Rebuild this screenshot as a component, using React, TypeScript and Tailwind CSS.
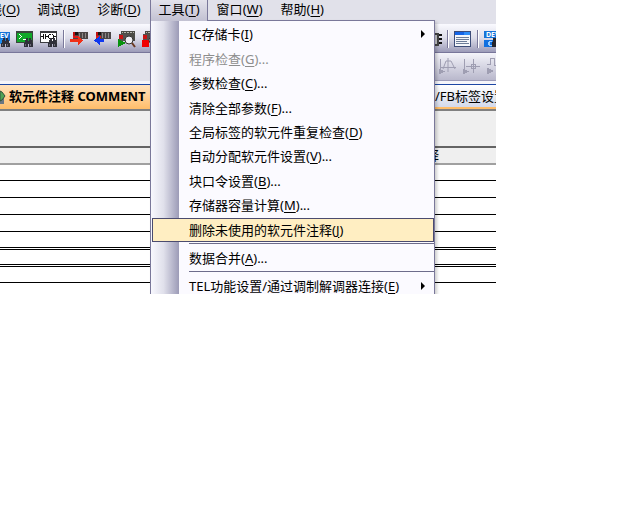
import type { ReactNode } from 'react';
import clsx from 'clsx';

type MenuEntry = {
  label: string;
  accessKey: string;
  suffix?: string;
  disabled?: boolean;
  selected?: boolean;
  submenu?: boolean;
};

const topMenus: (MenuEntry & { open?: boolean })[] = [
  { label: '调试', accessKey: 'B' },
  { label: '诊断', accessKey: 'D' },
  { label: '工具', accessKey: 'T', open: true },
  { label: '窗口', accessKey: 'W' },
  { label: '帮助', accessKey: 'H' },
];

const toolItems: MenuEntry[] = [
  { label: 'IC存储卡', accessKey: 'I', submenu: true },
  { label: '程序检查', accessKey: 'G', suffix: '...', disabled: true },
  { label: '参数检查', accessKey: 'C', suffix: '...' },
  { label: '清除全部参数', accessKey: 'F', suffix: '...' },
  { label: '全局标签的软元件重复检查', accessKey: 'D' },
  { label: '自动分配软元件设置', accessKey: 'V', suffix: '...' },
  { label: '块口令设置', accessKey: 'B', suffix: '...' },
  { label: '存储器容量计算', accessKey: 'M', suffix: '...' },
  { label: '删除未使用的软元件注释', accessKey: 'J', selected: true },
];

// height includes the bottom rule
const rows = [
  'h-4 border-b',
  'h-[17px] border-b',
  'h-[17px] border-b',
  'h-[17px] border-b',
  'h-[18px] border-b-3 border-double',
  'h-[17px] border-b-3 border-double',
  'h-4 border-b',
];

function Label({ label, accessKey, suffix }: MenuEntry) {
  return (
    <span>
      {label}(<u className="underline-offset-2">{accessKey}</u>){suffix}
    </span>
  );
}

function Icon({ width = 18, children }: { width?: number; children: ReactNode }) {
  return (
    <svg
      className="block shrink-0"
      width={width}
      height="17"
      viewBox={`0 0 ${width} 17`}
      shapeRendering="crispEdges"
      aria-hidden="true"
    >
      {children}
    </svg>
  );
}

function Binoculars({ x = 8 }: { x?: number }) {
  return (
    <g transform={`translate(${x} 7)`} fill="#30303a">
      <path d="M1 2h1V0h2v3h1V0h2v2h1v3h1v4H5V6H4v3H0V5h1z" />
      <path d="M1 6h1v2H1zM6 6h1v2H6z" fill="#6c6c78" />
    </g>
  );
}

function DevFind() {
  return (
    <Icon width={10}>
      <path d="M0 1h10v9H0z" fill="#1673d8" />
      <text x="-5" y="7" fontSize="7" fontWeight="700" fill="#fff">DEV</text>
      <path d="M0 8h4v5H0z" fill="#1e8cf0" />
      <Binoculars x={1} />
    </Icon>
  );
}

function ScreenFind() {
  return (
    <Icon>
      <path d="M0 0h17v12H0z" fill="#3c463e" />
      <path d="M1 2h15v9H1z" fill="#10a828" />
      <path d="M3 3h1v1h1v1h1v1H5v1H4v1H3V7h1V6h1V5H4V4H3zM7 8h4v1H7z" fill="#fff" />
      <Binoculars />
    </Icon>
  );
}

function ContactFind() {
  return (
    <Icon>
      <path d="M0 0h17v12H0z" fill="#3c3c40" />
      <path d="M1 2h15v9H1z" fill="#fff" />
      <path
        d="M1 5h2V3h1v5H3V6H1zM5 3h1v2h2V4h1V3h2v1H9v3h2v1H9V7H8V6H6v2H5zM12 3h1v1h1v1h2v1h-2v1h-1v1h-1V7h1V4h-1z"
        fill="#111"
      />
      <Binoculars />
    </Icon>
  );
}

function Controller({ x = 0, y = 0 }: { x?: number; y?: number }) {
  return (
    <g transform={`translate(${x} ${y})`}>
      <path d="M0 1h15v7H0z" fill="#4b4546" />
      <path d="M0 1h2v5H0z" fill="#c01010" />
      <path d="M2 1h3v3H2z" fill="#1c1010" />
      <path d="M6 2h1v5H6zM9 2h1v5H9zM12 2h1v5h-1z" fill="#8b8686" />
      <path d="M0 5h5v2H0z" fill="#e01818" />
    </g>
  );
}

function WritePlc() {
  return (
    <Icon>
      <Controller x={3} />
      <path d="M0 8h8V5h1v1h1v1h1v1h1v1h1v1h-1v1h-1v1h-1v1H9v1H8v-3H0z" fill="#f03018" />
    </Icon>
  );
}

function ReadPlc() {
  return (
    <Icon>
      <Controller x={2} />
      <path d="M10 8H6V5H5v1H4v1H3v1H1v1H0v1h1v1h2v1h1v1h1v1h1v-3h4z" fill="#1038f0" />
    </Icon>
  );
}

function Monitor({ stop = false }: { stop?: boolean }) {
  return (
    <Icon>
      <path d="M3 0h14v10H3z" fill="#4c4c46" />
      <path d="M4 1h12v1H4z" fill="#b8b8b0" />
      <path d="M5 1h1v2H5zM8 1h1v2H8zM11 1h1v2h-1zM14 1h1v2h-1z" fill="#4c4c46" />
      <path d="M1 3h11v7H1z" fill="#55504e" />
      <path d="M1 4h4v4H1z" fill="#c81414" />
      {stop ? (
        <path d="M0 9h7v7H0z" fill="#f00000" />
      ) : (
        <path d="M0 8h1v1h2v1h2v1h2v2H5v1H3v1H1v1H0z" fill="#08920e" />
      )}
      <g shapeRendering="auto">
        <circle cx="11" cy="9" r="4" fill="#f0f0f4" stroke="#333" />
        <path d="M14 12l3 4" stroke="#6b3a22" strokeWidth="2" />
      </g>
    </Icon>
  );
}

function ListWindow() {
  return (
    <Icon>
      <path d="M0 0h17v16H0z" fill="#3c4c78" />
      <path d="M1 1h15v3H1z" fill="#1464e6" />
      <path d="M10 1h6v3h-6z" fill="#2c8cf8" />
      <path d="M1 4h15v11H1z" fill="#f4f6fa" />
      <path d="M2 6h13v1H2zM2 8h13v1H2zM2 10h11v1H2zM2 12h13v1H2z" fill="#6c7c98" />
    </Icon>
  );
}

function Separator() {
  return <span className="-mx-px h-[18px] w-0.5 border-l border-[#7a789a] bg-white" />;
}

function Waveforms() {
  return (
    <>
      <Icon>
        <path d="M1 1h1v11H1zM1 9h16v1H1z" fill="#9f9eb2" />
        <path d="M0 11h2v1h2v1h2v1H4v1H2v1H0z" fill="#9f9eb2" />
        <path d="M4 11L7 3h5l4 8M9 0v14" fill="none" stroke="#9f9eb2" shapeRendering="auto" />
      </Icon>
      <Icon>
        <path d="M1 1h1v11H1zM3 8h14v1H3zM10 1h1v14h-1z" fill="#9f9eb2" />
        <path d="M0 11h2v1h2v1h2v1H4v1H2v1H0zM8 6h5v1H8zM8 10h5v1H8zM8 6h1v5H8zM12 6h1v5h-1z" fill="#9f9eb2" />
      </Icon>
      <Icon width={9}>
        <path d="M0 6h3V0h5v7h1v1H7V1H4v6H0z" fill="#9f9eb2" />
        <path d="M0 10h2v1h2v1h2v2H4v1H2v1H0z" fill="#9f9eb2" />
      </Icon>
    </>
  );
}

function ToolButton({ label, children }: { label: string; children: ReactNode }) {
  return (
    <button type="button" aria-label={label} className="shrink-0">
      {children}
    </button>
  );
}

function MenuBar() {
  return (
    <nav className="flex h-6 items-start bg-[#e1e1ea] leading-[19px]">
      <button type="button" className="flex w-[28px] shrink-0 justify-end overflow-hidden pr-2 whitespace-nowrap">
        <Label label="在线" accessKey="O" />
      </button>
      {topMenus.map((menu) => (
        <button
          key={menu.label}
          type="button"
          className={clsx(
            'h-[21px] shrink-0 border-x px-2 pb-0.5 whitespace-nowrap',
            menu.open
              ? 'z-20 w-[58px] border-[#7a789a] bg-linear-to-b from-[#e3e2eb] to-[#c2c1d2] text-left'
              : 'border-transparent',
          )}
        >
          <Label {...menu} />
        </button>
      ))}
    </nav>
  );
}

function MenuItem({ className, ...props }: MenuEntry & { className?: string }) {
  return (
    <button
      type="button"
      disabled={props.disabled}
      className={clsx(
        'ml-px flex w-[282px] items-center justify-between border pr-2 pl-9 text-left whitespace-nowrap',
        props.selected ? 'border-[#4b4b6f] bg-[#ffeec2]' : 'border-transparent',
        props.disabled && 'text-[#8d8d8d]',
        className,
      )}
    >
      <Label {...props} />
      {props.submenu && (
        <svg width="4" height="8" viewBox="0 0 4 8" aria-hidden="true">
          <path d="M0 0l4 4-4 4z" />
        </svg>
      )}
    </button>
  );
}

function ToolsMenu() {
  return (
    <div className="absolute top-5 left-[150px] z-10 w-[285px] border border-[#7a789a] bg-[#fbfaff] bg-[linear-gradient(to_right,#f8f8fe,#e0e0eb_45%,#9c9bb7)] bg-[length:28px_100%] bg-no-repeat pt-px shadow-[2px_2px_3px_rgba(0,0,0,0.2)]">
      <div className="grid h-[220px] auto-rows-fr">
        {toolItems.map((item) => (
          <MenuItem key={item.label} {...item} />
        ))}
      </div>
      <hr className="my-px ml-[38px] border-[#6d6c8b]" />
      <MenuItem label="数据合并" accessKey="A" suffix="..." className="h-[25px]" />
      <hr className="my-px ml-[38px] border-[#6d6c8b]" />
      <MenuItem label="TEL功能设置/通过调制解调器连接" accessKey="E" submenu className="h-[25px]" />
    </div>
  );
}

export default function App() {
  return (
    <div className="min-h-screen bg-white font-['Noto_Sans','Noto_Sans_CJK_SC',sans-serif] text-[13px] leading-[18px] text-black">
      <div className="relative h-[294px] max-w-[496px] overflow-hidden">
        <MenuBar />

        <div className="flex h-[29px] items-center justify-between border-b border-[#78769a] bg-linear-to-b from-[#fafaff] via-[#dddde9] to-[#9c9bb8] pt-0.5">
          <div className="flex items-center gap-[6px]">
            <ToolButton label="软元件搜索"><DevFind /></ToolButton>
            <ToolButton label="指令搜索"><ScreenFind /></ToolButton>
            <ToolButton label="触点线圈搜索"><ContactFind /></ToolButton>
            <Separator />
            <ToolButton label="PLC写入"><WritePlc /></ToolButton>
            <ToolButton label="PLC读取"><ReadPlc /></ToolButton>
            <ToolButton label="监视开始"><Monitor /></ToolButton>
            <ToolButton label="监视停止"><Monitor stop /></ToolButton>
          </div>
          <div className="flex items-center gap-[6px]">
            <ToolButton label="模块">
              <Icon width={8}>
                <path d="M0 2h5v13H0z" fill="#444" />
                <path d="M0 4h3v9H0z" fill="#c8c8cc" />
                <path d="M5 3h3v2H5zM5 7h3v2H5zM5 11h3v2H5z" fill="#111" />
              </Icon>
            </ToolButton>
            <Separator />
            <ToolButton label="窗口列表"><ListWindow /></ToolButton>
            <Separator />
            <ToolButton label="软元件注释">
              <Icon width={12}>
                <path d="M0 0h12v7H0z" fill="#1673d8" />
                <text x="2" y="6" fontSize="7" fontWeight="700" fill="#fff">DEV</text>
                <path d="M0 9h12v7H0z" fill="#1070e0" />
                <path d="M5 10h3v1H6v3h2v1H5v-1H4v-3h1z" fill="#9fd0ff" />
                <path d="M9 7h3v9H8v-5h1z" fill="#26262c" />
              </Icon>
            </ToolButton>
          </div>
        </div>

        <div className="flex h-7 justify-end bg-[#e1e1ea]">
          <div className="flex w-1/3 items-center justify-end gap-[6px] border-b border-[#9c9bb8] bg-linear-to-b from-[#f4f4fa] to-[#b9b8cc]">
            <Waveforms />
          </div>
        </div>

        <div className="border-t-3 border-[#f5f5fa]">
          <div className="flex h-[25px] justify-between border-t border-[#1c46a4]">
            <button
              type="button"
              className="flex w-1/2 items-center gap-[3px] bg-linear-to-b from-[#ffe2bd] to-[#ffbd69] pb-0.5 font-bold whitespace-nowrap"
            >
              <svg className="shrink-0" width="6" height="17" viewBox="0 0 6 17" aria-hidden="true">
                <path d="M0 8h4v8H0z" fill="#6a7682" />
                <path d="M0 3l2 1 3 4-3 4-2 1z" fill="#4fa456" stroke="#33503a" />
              </svg>
              软元件注释 COMMENT
            </button>
            <button
              type="button"
              className="w-[61px] overflow-hidden border-b-2 border-[#ffbd69] bg-linear-to-b from-white to-[#d3d9ea] text-left whitespace-nowrap"
            >
              /FB标签设置
            </button>
          </div>
        </div>

        <div className="h-[39px] border-t-2 border-b-2 border-t-[#808080] border-b-[#646464] bg-[#efefef]" />

        <table className="w-full border-separate border-spacing-0 bg-white">
          <thead>
            <tr>
              <th className="h-[17px] border-b-2 border-[#a0a0a0] bg-[#efefef] p-0 pl-[426px] text-left leading-[15px] font-normal">
                释
              </th>
            </tr>
          </thead>
          <tbody>
            {rows.map((row, i) => (
              <tr key={i}>
                <td className={clsx('border-black p-0 leading-none', row)} />
              </tr>
            ))}
          </tbody>
        </table>

        <ToolsMenu />
      </div>
    </div>
  );
}
